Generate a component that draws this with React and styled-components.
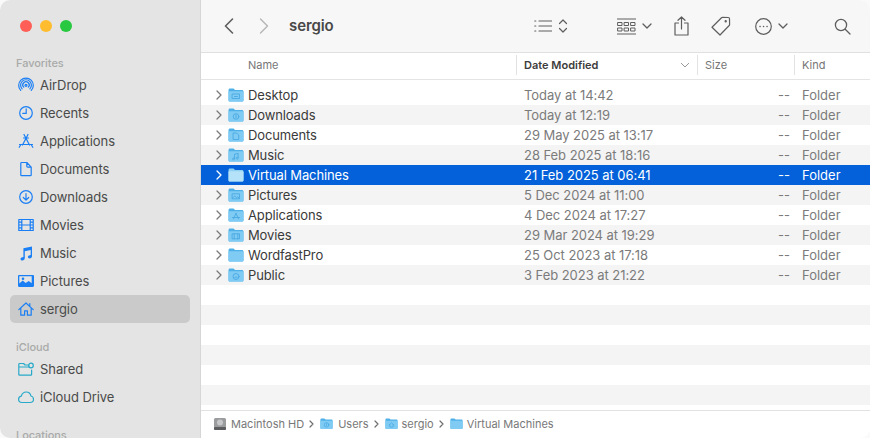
import React from "react";
import styled, { createGlobalStyle } from "styled-components";

const Global = createGlobalStyle`
  html, body { margin: 0; padding: 0; background: #fafafa; }
  body { font-family: Inter, "Liberation Sans", sans-serif; -webkit-font-smoothing: antialiased; }
  #root { width: 870px; height: 438px; overflow: hidden; }
`;

const Window = styled.div`
  width: 870px; height: 438px; display: flex; overflow: hidden;
  border-radius: 10px; background: #fff;
`;
const Sidebar = styled.aside`
  width: 201px; height: 438px; flex: none; box-sizing: border-box; padding: 0 10px;
  background: #e3e4e3; border-right: 1px solid #d6d6d6; overflow: hidden;
  color: #4a4a4a; font-size: 13px; letter-spacing: -0.07px;
`;
const Lights = styled.div`
  display: flex; gap: 8px; padding: 20px 0 0 10px; height: 34px; box-sizing: content-box;
`;
const Light = styled.span`
  width: 12px; height: 12px; border-radius: 50%; background: ${p => p.$c};
`;
const SectionTitle = styled.div`
  font-size: 11px; font-weight: 500; color: #a9aaa9; height: 17px; line-height: 19px;
  padding-left: 6px; margin-top: ${p => p.$top || 0}px;
`;
const NavItem = styled.div`
  height: 28px; display: flex; align-items: center; gap: 6px; padding-left: 8px; border-radius: 5px;
  background: ${p => (p.$active ? "#c9cac9" : "transparent")};
`;
const NavIcon = styled.svg`
  width: 16px; height: 16px; flex: none; fill: none; stroke: ${p => p.$c || "#1a7ef5"}; stroke-width: 1.2;
  stroke-linecap: round; stroke-linejoin: round;
`;
const Main = styled.main`
  flex: 1; min-width: 0; display: flex; flex-direction: column; height: 438px;
`;
const Toolbar = styled.header`
  height: 53px; flex: none; box-sizing: border-box; display: flex; align-items: center;
  background: #f7f7f7; border-bottom: 1px solid #e0e0e0; color: #5e5e5e;
`;
const Tool = styled.svg`
  flex: none; margin-left: ${p => p.$ml}px; width: ${p => p.$w}px; height: ${p => p.$h}px;
  fill: none; stroke: ${p => p.$c || "#5e5e5e"}; stroke-width: ${p => p.$sw || 1.2};
  stroke-linecap: round; stroke-linejoin: round;
`;
const Title = styled.h1`
  margin: 0 0 0 20px; width: 60px; font-size: 15px; font-weight: 600; color: #484848; line-height: 20px;
  letter-spacing: -0.1px;
`;
const HeaderRow = styled.div`
  height: 27px; flex: none; box-sizing: border-box; display: grid; grid-template-columns: 315px 181px 97px 1fr;
  align-items: center; padding-bottom: 2px; border-bottom: 1px solid #e4e4e4; background: #fff; font-size: 11px; color: #767676;
`;
const HeaderCell = styled.div`
  height: 20px; line-height: 20px; box-sizing: border-box; padding-left: ${p => p.$pl || 7}px;
  border-left: ${p => (p.$first ? "none" : "1px solid #e2e2e2")};
  font-weight: ${p => (p.$sorted ? 600 : 400)}; color: ${p => (p.$sorted ? "#3c3c3c" : "#767676")};
  display: flex; align-items: center; justify-content: space-between;
`;
const SortChevron = styled.svg`
  width: 10px; height: 6px; margin-right: 7px; fill: none; stroke: #9a9a9a; stroke-width: 1;
`;
const List = styled.div`
  flex: 1; min-height: 0; padding-top: 5px; overflow: hidden;
`;
const Row = styled.div`
  height: 20px; display: grid; grid-template-columns: 315px 173px 104px 1fr; align-items: center;
  font-size: 13px; color: ${p => (p.$sel ? "#fff" : "#7b7b7b")};
  background: ${p => (p.$sel ? "#0461d9" : p.$odd ? "#f4f4f4" : "#fff")};
`;
const NameCell = styled.div`
  display: flex; align-items: center; color: ${p => (p.$sel ? "#fff" : "#3a3a3a")}; white-space: nowrap;
  letter-spacing: -0.12px;
`;
const Disclosure = styled.svg`
  width: 6px; height: 10px; margin: 0 6px 0 15px; flex: none; fill: none;
  stroke: ${p => (p.$sel ? "#fff" : "#7a7a7a")}; stroke-width: 1.3; stroke-linecap: round; stroke-linejoin: round;
`;
const FolderSvg = styled.svg`
  width: ${p => p.$s || 16}px; height: ${p => ((p.$s || 16) * 14) / 16}px; flex: none; margin-right: ${p => p.$mr ?? 4}px;
`;
const DateCell = styled.div` padding-left: 8px; white-space: nowrap; letter-spacing: -0.05px; `;
const SizeCell = styled.div` text-align: right; padding-right: 3px; `;
const KindCell = styled.div` padding-left: 9px; `;
const StatusBar = styled.footer`
  height: 28px; flex: none; box-sizing: border-box; border-top: 1px solid #e2e2e2; background: #fff;
  display: flex; align-items: center; padding: 0 0 1px 12px; font-size: 11px; color: #787878;
`;
const DiskIcon = styled.svg`
  width: 14px; height: 14px; margin-right: 4px; flex: none;
`;
const Crumb = styled.span` white-space: nowrap; `;
const CrumbSep = styled.svg`
  width: 5px; height: 8px; margin: 0 6px 0 5px; fill: none; stroke: #6e6e6e; stroke-width: 1.2;
  stroke-linecap: round; stroke-linejoin: round; flex: none;
`;

const Folder = ({ glyph, sel, s, mr }) => (
  <FolderSvg viewBox="0 0 16 14" $s={s} $mr={mr}>
    <path d="M.5 2.2C.5 1.2 1.1.6 2 .6h3.2c.6 0 .9.3 1.3.8l.5.5h6.9c1 0 1.6.6 1.6 1.6V12c0 1-.6 1.5-1.5 1.5H2C1.1 13.5.5 13 .5 12Z" fill={sel ? "#8fd0f3" : "#4fb0e8"} />
    <path d="M.5 4.2c0-.5.4-.9.9-.9h13.2c.5 0 .9.4.9.9V12c0 1-.6 1.5-1.5 1.5H2C1.1 13.5.5 13 .5 12Z" fill={sel ? "#b5e2f8" : "#7fcbf3"} />
    {glyph && <g fill="none" stroke="#4aa8e2" strokeWidth=".9" strokeLinecap="round" strokeLinejoin="round">{glyph}</g>}
  </FolderSvg>
);

const glyphs = {
  desktop: <path d="M4.5 6h7v4.5h-7ZM6.5 8.5h3" />,
  downloads: <><circle cx="8" cy="8.5" r="2.8" /><path d="M8 7v2.6" /></>,
  documents: <path d="M5.5 5h3.2l2 2v4.5H5.5Z" />,
  music: <path d="M6.5 10.5V6.2l3.6-.8v4.3M6.5 10.5a1 1 0 1 1-1-.6M10.1 9.7a1 1 0 1 1-1-.6" />,
  pictures: <path d="M4.5 5.8h7v5h-7ZM4.5 10l2.2-2 2 1.6 1-.8 1.8 1.2" />,
  apps: <path d="M8 5.3 5.5 10.8M8 5.3l2.5 5.5M4.5 9.5h7" />,
  movies: <path d="M4.5 5.8h7v5h-7ZM6.2 5.8v5M9.8 5.8v5" />,
  public: <><circle cx="8" cy="8.5" r="3" /><path d="M6.6 9.6c.2-1 2.6-1 2.8 0" /></>,
  home: <path d="M5 8.5 8 6l3 2.5M6 8v3h4V8" />,
};

const rows = [
  ["Desktop", "Today at 14:42", glyphs.desktop],
  ["Downloads", "Today at 12:19", glyphs.downloads],
  ["Documents", "29 May 2025 at 13:17", glyphs.documents],
  ["Music", "28 Feb 2025 at 18:16", glyphs.music],
  ["Virtual Machines", "21 Feb 2025 at 06:41", null],
  ["Pictures", "5 Dec 2024 at 11:00", glyphs.pictures],
  ["Applications", "4 Dec 2024 at 17:27", glyphs.apps],
  ["Movies", "29 Mar 2024 at 19:29", glyphs.movies],
  ["WordfastPro", "25 Oct 2023 at 17:18", null],
  ["Public", "3 Feb 2023 at 21:22", glyphs.public],
  null, null, null, null, null, null,
];

const icons = {
  airdrop: <><circle cx="8" cy="8.3" r="1" /><path d="M5.7 10.2a3.2 3.2 0 1 1 4.6 0M4.1 11.9a5.4 5.4 0 1 1 7.8 0M2.7 13.4a7.3 7.3 0 1 1 10.6 0" /></>,
  recents: <><circle cx="8" cy="8" r="6.3" /><path d="M8.2 3.9v4.5H4.8" /></>,
  apps: <path d="M6 1.5l5.5 10.5M10 1.5 4.5 12M1.5 11.5h13M1.2 14.3 2.6 12M14.8 14.3 13.4 12M5.5 5h5" />,
  docs: <path d="M2.8 2.3c0-.5.3-.8.8-.8h5.2l4.4 4.6v7.8c0 .5-.3.8-.8.8H3.6c-.5 0-.8-.3-.8-.8ZM8.8 1.5v3.8c0 .5.3.8.8.8h3.6" />,
  down: <><circle cx="8" cy="8" r="6.3" /><path d="M8 4.5v6.5M5.3 8.5 8 11.2l2.7-2.7" /></>,
  movies: <path d="M.8 2.5h14.4v11H.8ZM3.8 2.5v11M12.2 2.5v11M.8 8h3M12.2 8h3M.8 5.2h3M12.2 5.2h3M.8 10.8h3M12.2 10.8h3M3.8 8h8.4" />,
  home: <path d="M.8 8.6 8 2l7.2 6.6M2.8 7v7.2h3.8V9.8h2.8v4.4h3.8V7M11.8 2.6v2.2" />,
  shared: <path d="M.8 3.5c0-.6.4-1 1-1h3.8l1.4 1.5h4M.8 6h10.4M.8 4v9.5c0 .4.3.7.7.7h11.4c.4 0 .7-.3.7-.7V9" />,
  cloud: <path d="M4 13.5C2 13.5.6 12 .6 10.3c0-1.6 1.1-2.9 2.7-3.2C4 4.6 6 3 8.2 3c2.4 0 4.3 1.7 4.7 4 1.5.3 2.6 1.6 2.6 3.2 0 1.8-1.4 3.3-3.3 3.3Z" />,
};

const solid = { fill: "#1a7ef5", stroke: "none" };
const MusicIcon = () => (
  <NavIcon viewBox="0 0 16 16"><path {...solid} d="M5.4 3.3 14 1.4v9.8c0 1.3-1.1 2.2-2.4 2.2-1 0-1.7-.6-1.7-1.4 0-1 .8-1.6 2-1.8l.8-.2V5L6.8 6.3v7c0 1.2-1.1 2.3-2.5 2.3-1 0-1.8-.6-1.8-1.5 0-1 .8-1.6 2-1.8l.9-.2Z" /></NavIcon>
);
const PicturesIcon = () => (
  <NavIcon viewBox="0 0 16 16"><path {...solid} fillRule="evenodd" d="M1.2 2h13.6c.7 0 1.2.5 1.2 1.2v9.6c0 .7-.5 1.2-1.2 1.2H1.2C.5 14 0 13.5 0 12.8V3.2C0 2.5.5 2 1.2 2Zm.1 1.3v7.2l3.4-3 3 2.5 3-2 3 2.2V3.3Z" /><circle {...solid} cx="5" cy="5.7" r="1.3" /></NavIcon>
);

const Nav = ({ d, c, active, children, custom }) => (
  <NavItem $active={active}>
    {custom || <NavIcon viewBox="0 0 16 16" $c={c}>{d}</NavIcon>}
    <span>{children}</span>
  </NavItem>
);

export default function App() {
  return (
    <>
      <Global />
      <Window>
        <Sidebar>
          <Lights>
            <Light $c="#ff5f57" /><Light $c="#febc2e" /><Light $c="#28c840" />
          </Lights>
          <SectionTitle>Favorites</SectionTitle>
          <Nav d={icons.airdrop}>AirDrop</Nav>
          <Nav d={icons.recents}>Recents</Nav>
          <Nav d={icons.apps}>Applications</Nav>
          <Nav d={icons.docs}>Documents</Nav>
          <Nav d={icons.down}>Downloads</Nav>
          <Nav d={icons.movies}>Movies</Nav>
          <Nav custom={<MusicIcon />}>Music</Nav>
          <Nav custom={<PicturesIcon />}>Pictures</Nav>
          <Nav d={icons.home} active>sergio</Nav>
          <SectionTitle $top={15}>iCloud</SectionTitle>
          <Nav d={<>{icons.shared}<circle cx="13" cy="4.5" r="2.3" /></>} c="#27a9c9">Shared</Nav>
          <Nav d={icons.cloud} c="#27a9c9">iCloud Drive</Nav>
          <SectionTitle $top={15}>Locations</SectionTitle>
        </Sidebar>
        <Main>
          <Toolbar>
            <Tool $ml={23} $w={10} $h={16} viewBox="0 0 10 16" $sw={1.6}><path d="M8.5 1 1.5 8l7 7" /></Tool>
            <Tool $ml={25} $w={10} $h={16} viewBox="0 0 10 16" $sw={1.4} $c="#b5b5b5"><path d="M1.5 1l7 7-7 7" /></Tool>
            <Title>sergio</Title>
            <Tool $ml={185} $w={18} $h={14} viewBox="0 0 18 14"><path d="M5 2h13M5 7h13M5 12h13M.8 2h1M.8 7h1M.8 12h1" /></Tool>
            <Tool $ml={6} $w={10} $h={16} viewBox="0 0 10 16"><path d="M1.5 5.5 5 2l3.5 3.5M1.5 10.5 5 14l3.5-3.5" /></Tool>
            <Tool $ml={49} $w={19} $h={17} viewBox="0 0 19 17" $sw={1}><path d="M0 1h19M0 16h19" /><path d="M1 4.5h4v3H1ZM7.5 4.5h4v3h-4ZM14 4.5h4v3h-4ZM1 10h4v3H1ZM7.5 10h4v3h-4ZM14 10h4v3h-4Z" /></Tool>
            <Tool $ml={6} $w={10} $h={6} viewBox="0 0 10 6" $sw={1.3}><path d="M1 1l4 4 4-4" /></Tool>
            <Tool $ml={22} $w={15} $h={20} viewBox="0 0 15 20"><path d="M4.5 7H1v12h13V7h-3.5M7.5 13V1M4 4.3 7.5 1 11 4.3" /></Tool>
            <Tool $ml={22} $w={20} $h={20} viewBox="0 0 20 20"><path d="M1 11.2 10.5 1.8c.3-.3.6-.4 1-.4l5.8.1c.7 0 1.2.5 1.2 1.2l.1 5.8c0 .4-.1.7-.4 1L9 19 1 11.2Z" /><circle cx="14.7" cy="5.2" r=".6" /></Tool>
            <Tool $ml={24} $w={17} $h={17} viewBox="0 0 17 17"><circle cx="8.5" cy="8.5" r="7.8" /><path d="M5 8.5h.1M8.5 8.5h.1M12 8.5h.1" strokeWidth="1.5" /></Tool>
            <Tool $ml={6} $w={10} $h={6} viewBox="0 0 10 6" $sw={1.3}><path d="M1 1l4 4 4-4" /></Tool>
            <Tool $ml={46} $w={17} $h={17} viewBox="0 0 17 17" $sw={1.3}><circle cx="7" cy="7" r="5.6" /><path d="m11.2 11.2 4.8 4.8" /></Tool>
          </Toolbar>
          <HeaderRow>
            <HeaderCell $first $pl={47}>Name</HeaderCell>
            <HeaderCell $sorted>Date Modified<SortChevron viewBox="0 0 10 6"><path d="M1 1l4 4 4-4" /></SortChevron></HeaderCell>
            <HeaderCell>Size</HeaderCell>
            <HeaderCell>Kind</HeaderCell>
          </HeaderRow>
          <List>
            {rows.map((r, i) => {
              const sel = i === 4;
              return (
                <Row key={i} $odd={i % 2 === 1} $sel={sel}>
                  {r && (
                    <>
                      <NameCell $sel={sel}>
                        <Disclosure viewBox="0 0 6 10" $sel={sel}><path d="M1 1l4 4-4 4" /></Disclosure>
                        <Folder glyph={r[2]} sel={sel} />
                        {r[0]}
                      </NameCell>
                      <DateCell>{r[1]}</DateCell>
                      <SizeCell>--</SizeCell>
                      <KindCell>Folder</KindCell>
                    </>
                  )}
                </Row>
              );
            })}
          </List>
          <StatusBar>
            <DiskIcon viewBox="0 0 14 14">
              <rect x="1" y="1" width="12" height="12" rx="1.5" fill="#9a9c9d" />
              <rect x="1" y="10" width="12" height="3" rx="1" fill="#5b5d5f" />
              <circle cx="7" cy="5.5" r="3" fill="#c5c7c8" />
            </DiskIcon>
            <Crumb>Macintosh HD</Crumb>
            <CrumbSep viewBox="0 0 5 8"><path d="M1 1l3 3-3 3" /></CrumbSep>
            <Folder s={13} mr={5} glyph={glyphs.downloads} />
            <Crumb>Users</Crumb>
            <CrumbSep viewBox="0 0 5 8"><path d="M1 1l3 3-3 3" /></CrumbSep>
            <Folder s={13} mr={4} glyph={glyphs.home} />
            <Crumb>sergio</Crumb>
            <CrumbSep viewBox="0 0 5 8"><path d="M1 1l3 3-3 3" /></CrumbSep>
            <Folder s={13} mr={4} />
            <Crumb>Virtual Machines</Crumb>
          </StatusBar>
        </Main>
      </Window>
    </>
  );
}
